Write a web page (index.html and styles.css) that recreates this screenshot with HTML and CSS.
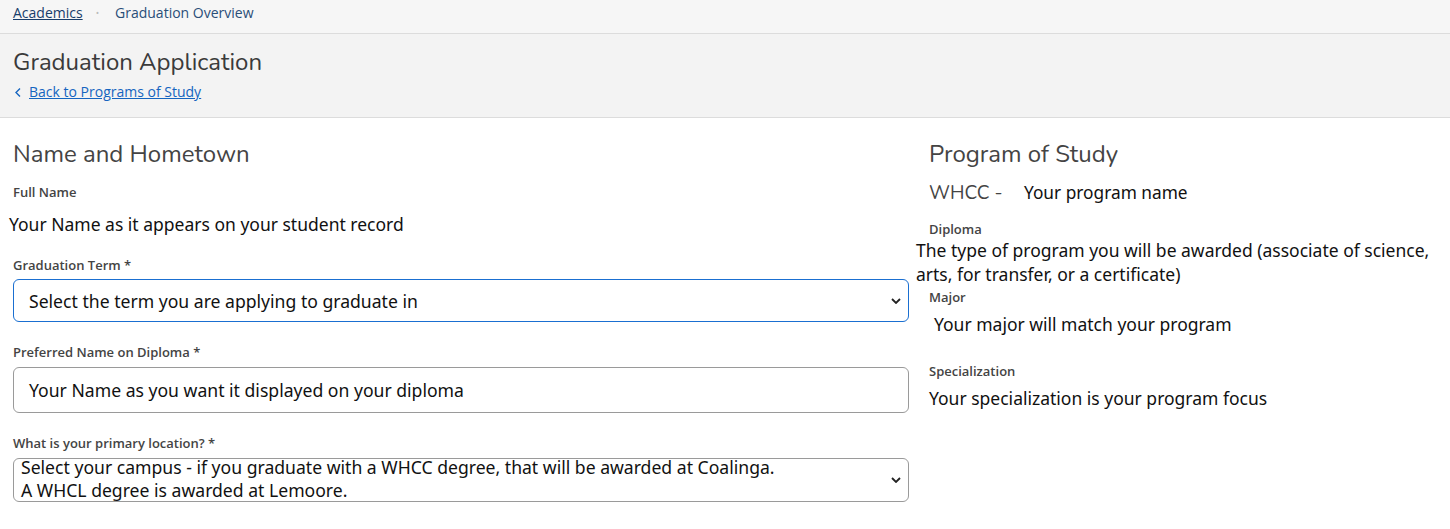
FILE: index.html
```html
<!DOCTYPE html>
<html lang="en">
<head>
<meta charset="utf-8">
<title>Graduation Application</title>
<link rel="stylesheet" href="styles.css">
</head>
<body>
<nav class="crumbs">
  <a class="crumb-link" href="#">Academics</a>
  <span class="crumb-sep">•</span>
  <span class="crumb-current">Graduation Overview</span>
</nav>
<header class="page-head">
  <h1 class="page-title">Graduation Application</h1>
  <a class="back-link" href="#">
    <svg class="back-icon" width="8" height="11" viewBox="0 0 8 11"><path d="M6 1.5 L2 5.5 L6 9.5" fill="none" stroke="#1565c0" stroke-width="1.4"/></svg>
    <span>Back to Programs of Study</span>
  </a>
</header>
<main class="content">
  <section class="col-left">
    <h2 class="section-title">Name and Hometown</h2>
    <div class="field-label first">Full Name</div>
    <div class="value value-full">Your Name as it appears on your student record</div>
    <div class="field-label">Graduation Term *</div>
    <div class="select select-focus">
      <span class="select-text">Select the term you are applying to graduate in</span>
      <svg class="chev" width="10" height="6" viewBox="0 0 10 6"><path d="M1 1 L5 5 L9 1" fill="none" stroke="#222" stroke-width="1.8"/></svg>
    </div>
    <div class="field-label after-input">Preferred Name on Diploma *</div>
    <div class="input">Your Name as you want it displayed on your diploma</div>
    <div class="field-label after-input">What is your primary location? *</div>
    <div class="select select-multi">
      <span class="select-text multi">Select your campus - if you graduate with a WHCC degree, that will be awarded at Coalinga.<br>A WHCL degree is awarded at Lemoore.</span>
      <svg class="chev" width="10" height="6" viewBox="0 0 10 6"><path d="M1 1 L5 5 L9 1" fill="none" stroke="#222" stroke-width="1.8"/></svg>
    </div>
  </section>
  <section class="col-right">
    <h2 class="section-title">Program of Study</h2>
    <div class="program-row">
      <span class="program-code">WHCC -</span>
      <span class="value program-name">Your program name</span>
    </div>
    <div class="field-label">Diploma</div>
    <div class="value value-diploma">The type of program you will be awarded (associate of science, arts, for transfer, or a certificate)</div>
    <div class="field-label tight">Major</div>
    <div class="value value-major">Your major will match your program</div>
    <div class="field-label spaced">Specialization</div>
    <div class="value value-spec">Your specialization is your program focus</div>
  </section>
</main>
</body>
</html>
```
FILE: styles.css
```css
* { box-sizing: border-box; }
html, body { margin: 0; padding: 0; background: #fff; }
body { font-family: "Open Sans", "Noto Sans", sans-serif; color: #333; width: 1450px; }

.crumbs {
  height: 34px;
  background: #f6f6f6;
  border-bottom: 1px solid #dcdcdc;
  padding: 0 13px 7px;
  display: flex;
  align-items: center;
  font-size: 14px;
  line-height: 20px;
}
.crumb-link { color: #183d6b; text-decoration: underline; }
.crumb-sep { color: #bbb; font-size: 9px; margin: 0 16px 0 13px; }
.crumb-current { color: #2a4e78; }

.page-head {
  background: #f3f3f3;
  border-bottom: 1px solid #dcdcdc;
  padding: 12px 13px 14px;
  height: 84px;
}
.page-title {
  margin: 0;
  font-family: "Nunito", "Lato", "Open Sans", sans-serif;
  font-weight: 400;
  font-size: 24px;
  line-height: 32px;
  color: #3a3a3a;
}
.back-link {
  display: inline-flex;
  align-items: center;
  gap: 7px;
  margin-top: 4px;
  font-size: 14px;
  line-height: 20px;
  color: #1565c0;
}
.back-link span { text-decoration: underline; }
.back-icon { margin-left: 1px; }

.content {
  display: grid;
  grid-template-columns: 896px 1fr;
  column-gap: 20px;
  padding: 20px 13px 0;
}
.section-title {
  margin: 0;
  font-family: "Nunito", "Lato", "Open Sans", sans-serif;
  font-weight: 400;
  font-size: 24px;
  line-height: 32px;
  color: #444;
}
.field-label {
  font-size: 13px;
  font-weight: 600;
  line-height: 18px;
  color: #444;
  margin-top: 20px;
}
.field-label.first { margin-top: 13px; }
.field-label.after-input { margin-top: 21px; }
.value {
  font-family: "Noto Sans", "Open Sans", sans-serif;
  font-size: 17.5px;
  line-height: 24px;
  color: #111;
}
.value-full { margin: 11px 0 0 -4px; }

.select, .input {
  display: flex;
  align-items: center;
  border: 1px solid #9a9a9a;
  border-radius: 6px;
  height: 44px;
  margin-top: 6px;
  padding: 0 5px 0 15px;
  font-family: "Noto Sans", "Open Sans", sans-serif;
  font-size: 17.6px;
  color: #111;
}
.select-focus { border-color: #1a6fd1; height: 43px; margin-top: 5px; }
.input { height: 46px; }
.select-text { flex: 1; }
.select-text.multi { line-height: 23px; margin-top: -2px; }
.select-multi { padding-left: 7px; height: 44px; margin-top: 6px; }
.chev { flex: none; margin-right: 2px; }

.program-row {
  display: flex;
  align-items: baseline;
  margin-top: 10px;
}
.program-code {
  font-family: "Nunito", "Lato", "Open Sans", sans-serif;
  font-size: 19px;
  color: #444;
  width: 95px;
}
.program-name { font-size: 17.3px; }
.col-right .field-label { margin-top: 14px; }
.value-diploma { margin-left: -13px; line-height: 24px; }
.col-right .field-label.tight { margin-top: 2px; }
.value-major { margin-left: 5px; margin-top: 6px; }
.col-right .field-label.spaced { margin-top: 26px; }
.value-spec { margin-top: 6px; }
```
